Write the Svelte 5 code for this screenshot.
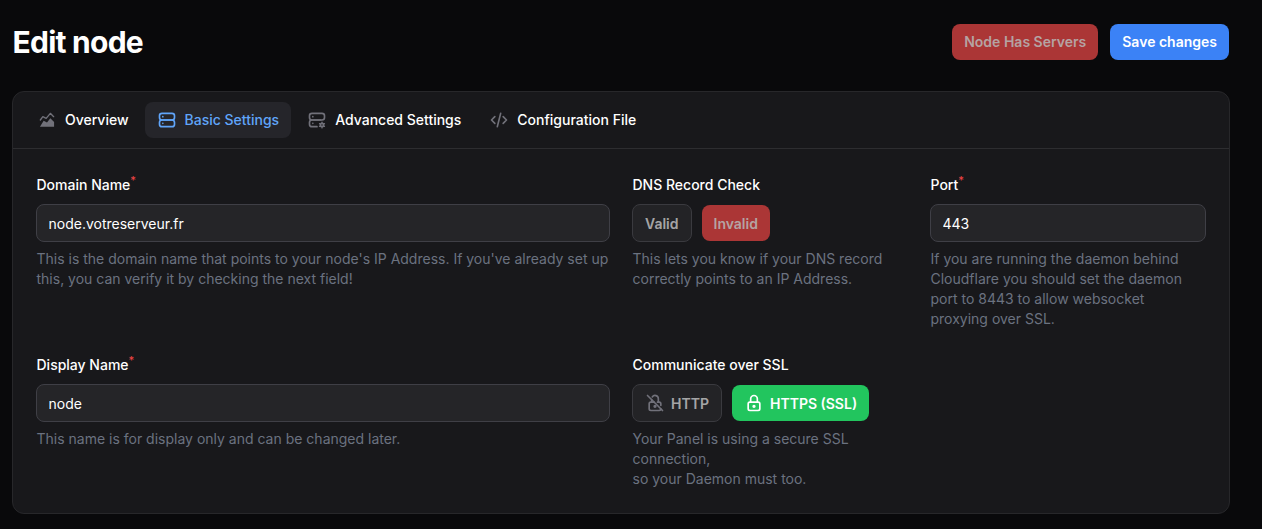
<script>
    const tabs = [
        { name: 'Overview', icon: 'chart' },
        { name: 'Basic Settings', icon: 'server', active: true },
        { name: 'Advanced Settings', icon: 'cog' },
        { name: 'Configuration File', icon: 'code' }
    ];
</script>

<div class="page">
    <header class="header">
        <h1>Edit node</h1>
        <div class="actions">
            <button class="btn danger">Node Has Servers</button>
            <button class="btn primary">Save changes</button>
        </div>
    </header>

    <section class="card">
        <nav class="tabs">
            {#each tabs as tab}
                <div class="tab" class:active={tab.active}>
                    <svg class="tab-icon" viewBox="0 0 24 24" fill="none" stroke="currentColor" stroke-width="2" stroke-linecap="round" stroke-linejoin="round">
                        {#if tab.icon === 'chart'}
                            <path fill="currentColor" stroke="none" d="M3.500 20l4.500-7 4 2 4-5 4.500 4.500V20z" />
                            <path d="M4 12l3-4 4 2 5-6 4 4" stroke-width="1.600" />
                        {:else if tab.icon === 'server'}
                            <path d="M3 7a3 3 0 0 1 3-3h12a3 3 0 0 1 3 3v2a3 3 0 0 1-3 3H6a3 3 0 0 1-3-3z" />
                            <path d="M3 15a3 3 0 0 1 3-3h12a3 3 0 0 1 3 3v2a3 3 0 0 1-3 3H6a3 3 0 0 1-3-3z" />
                            <path d="M7 8v.01M7 16v.01" />
                        {:else if tab.icon === 'cog'}
                            <path d="M3 7a3 3 0 0 1 3-3h12a3 3 0 0 1 3 3v2a3 3 0 0 1-3 3H6a3 3 0 0 1-3-3z" />
                            <path d="M12 20H6a3 3 0 0 1-3-3v-2a3 3 0 0 1 3-3h10.500" />
                            <path d="M7 8v.01M7 16v.01" />
                            <circle cx="18" cy="18" r="2" />
                            <path d="M18 14.500V16M18 20v1.500M21 16.250l-1.300.750M16.300 19l-1.300.750M15 16.250l1.300.750M19.700 19l1.300.750" stroke-width="1.500" />
                        {:else}
                            <path d="M7 8l-4 4 4 4M17 8l4 4-4 4M14 4l-4 16" />
                        {/if}
                    </svg>
                    <span class="tab-name">{tab.name}</span>
                </div>
            {/each}
        </nav>

        <div class="form">
            <div class="field">
                <label class="label" for="domain">Domain Name<sup>*</sup></label>
                <input id="domain" class="input" value="node.votreserveur.fr" />
                <p class="hint">This is the domain name that points to your node's IP Address. If you've already set up this, you can verify it by checking the next field!</p>
            </div>

            <div class="field">
                <span class="label">DNS Record Check</span>
                <div class="toggles">
                    <span class="toggle off">Valid</span>
                    <span class="toggle invalid">Invalid</span>
                </div>
                <p class="hint">This lets you know if your DNS record correctly points to an IP Address.</p>
            </div>

            <div class="field">
                <label class="label" for="port">Port<sup>*</sup></label>
                <input id="port" class="input" value="443" />
                <p class="hint port-hint">If you are running the daemon behind Cloudflare you should set the daemon port to 8443 to allow websocket proxying over SSL.</p>
            </div>

            <div class="field">
                <label class="label" for="display">Display Name<sup>*</sup></label>
                <input id="display" class="input" value="node" />
                <p class="hint">This name is for display only and can be changed later.</p>
            </div>

            <div class="field">
                <span class="label">Communicate over SSL</span>
                <div class="toggles">
                    <span class="toggle off">
                        <svg class="lock dim" viewBox="0 0 24 24" fill="none" stroke="currentColor" stroke-width="2" stroke-linecap="round" stroke-linejoin="round">
                            <path d="M3 3l18 18" />
                            <path d="M19 19a2 2 0 0 1-2 2H7a2 2 0 0 1-2-2v-6a2 2 0 0 1 2-2h4m4 0h2a2 2 0 0 1 2 2v2" />
                            <path d="M11 16a1 1 0 1 0 2 0 1 1 0 0 0-2 0" />
                            <path d="M8 11V8m.719-3.289A4 4 0 0 1 16 7v4" />
                        </svg>
                        HTTP
                    </span>
                    <span class="toggle ssl">
                        <svg class="lock" viewBox="0 0 24 24" fill="none" stroke="currentColor" stroke-width="2" stroke-linecap="round" stroke-linejoin="round">
                            <path d="M5 13a2 2 0 0 1 2-2h10a2 2 0 0 1 2 2v6a2 2 0 0 1-2 2H7a2 2 0 0 1-2-2z" />
                            <path d="M11 16a1 1 0 1 0 2 0 1 1 0 0 0-2 0" />
                            <path d="M8 11V7a4 4 0 1 1 8 0v4" />
                        </svg>
                        HTTPS (SSL)
                    </span>
                </div>
                <p class="hint">Your Panel is using a secure SSL connection,<br />so your Daemon must too.</p>
            </div>
        </div>
    </section>
</div>

<style>
    :global(body) {
        margin: 0;
        background: #09090b;
    }

    .page {
        padding: 24px 33px 0 12px;
        font-family: Inter, "Liberation Sans", sans-serif;
        color: #fff;
    }

    .header {
        display: flex;
        justify-content: space-between;
        align-items: center;
        height: 36px;
        margin-bottom: 31px;
    }

    h1 {
        margin: 0 0 0 0.5px;
        font-size: 30px;
        line-height: 36px;
        font-weight: 700;
        letter-spacing: -0.75px;
    }

    .actions {
        display: flex;
        gap: 12px;
    }

    .btn {
        height: 36px;
        padding: 0 12px;
        border: none;
        border-radius: 8px;
        font: 600 14px/20px Inter, "Liberation Sans", sans-serif;
    }

    .danger {
        background: #ab3636;
        color: #b5a3a3;
    }

    .primary {
        background: #3b82f6;
        color: #fff;
    }

    .card {
        margin-right: -1px;
        height: 423px;
        box-sizing: border-box;
        background: #18181b;
        border: 1px solid #27272a;
        border-radius: 12px;
    }

    .tabs {
        display: flex;
        gap: 4px;
        box-sizing: border-box;
        height: 57px;
        padding: 10px 12px 0;
        border-bottom: 1px solid #2d2d30;
    }

    .tab {
        display: flex;
        align-items: center;
        gap: 8px;
        height: 36px;
        padding: 0 12px;
        border-radius: 8px;
        font-size: 14px;
        font-weight: 500;
    }

    .tab-name {
        margin-bottom: 2px;
    }

    .tab.active {
        background: #25252a;
        color: #60a5fa;
    }

    .tab-icon {
        width: 20px;
        height: 20px;
        color: #71717a;
    }

    .active .tab-icon {
        color: #60a5fa;
    }

    .form {
        display: grid;
        grid-template-columns: 574px 276px 276px;
        grid-template-rows: 180px auto;
        column-gap: 22px;
        padding: 26px 23px 0;
    }

    .field {
        min-width: 0;
    }

    .label {
        display: block;
        height: 20px;
        margin: 0 0 9px 0.5px;
        font-size: 14px;
        line-height: 20px;
        font-weight: 500;
    }

    sup {
        color: #ef4444;
        font-size: 11px;
        line-height: 0;
    }

    .input {
        display: block;
        width: 100%;
        height: 38px;
        box-sizing: border-box;
        padding: 0 11.5px;
        background: #252528;
        border: 1px solid #3f3f46;
        border-radius: 8px;
        color: #fff;
        font: 400 14px/20px Inter, "Liberation Sans", sans-serif;
    }

    .hint {
        margin: 7px 0 0 0.5px;
        font-size: 14px;
        line-height: 20px;
        color: #6b7280;
    }

    .port-hint {
        padding-right: 4px;
    }

    .toggles {
        display: flex;
        gap: 10px;
        height: 38px;
        align-items: center;
    }

    .toggle {
        display: inline-flex;
        align-items: center;
        gap: 6px;
        height: 36px;
        padding: 0 12px;
        box-sizing: border-box;
        border-radius: 8px;
        font-size: 14px;
        font-weight: 600;
    }

    .off {
        height: 38px;
        background: #232326;
        border: 1px solid #3a3a3f;
        color: rgba(255, 255, 255, 0.6);
    }

    .invalid {
        background: #ab3636;
        color: #b5a3a3;
    }

    .ssl {
        background: #22c55e;
        color: #fff;
    }

    .lock {
        width: 20px;
        height: 20px;
    }

    .lock.dim {
        color: #71717a;
    }
</style>
